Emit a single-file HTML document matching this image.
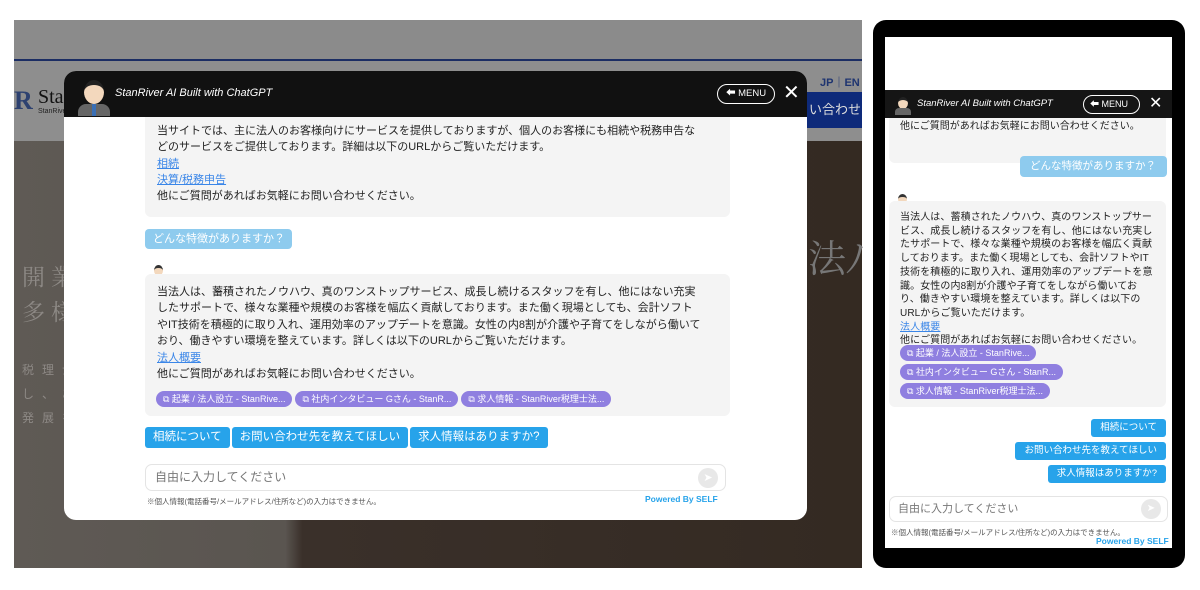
<!DOCTYPE html>
<html><head><meta charset="utf-8"><style>
*{margin:0;padding:0;box-sizing:border-box}
body{width:1200px;height:590px;background:#fff;position:relative;overflow:hidden;font-family:"Liberation Sans","Noto Sans CJK JP",sans-serif;color:#222}
.a{position:absolute}
.bub{background:#f4f4f4;border-radius:6px}
a{color:#3a86e8;text-decoration:underline}
.chip{display:inline-block;background:#8f7fe0;color:#fff;border-radius:9px;font-size:9px;height:16px;line-height:16px;padding:0 7px 0 7px;margin-right:3px}
.btn{display:inline-block;background:#27a3ea;color:#fff;border-radius:3px;font-size:11.5px;height:21px;line-height:21px;padding:0 8px;margin-right:2px}
.pbtn{background:#27a3ea;color:#fff;border-radius:3px;font-size:9.5px;height:18px;line-height:18px;padding:0 9px;position:absolute;right:6px}
.av{position:absolute;border-radius:50%}
</style></head><body>
<div class="a" style="left:14px;top:20px;width:848px;height:548px;background:#8b8b8b"></div>
<div class="a" style="left:14px;top:59px;width:848px;height:2px;background:#1b2d63"></div>
<div class="a" style="left:14px;top:61px;width:848px;height:80px;background:#8e8e8e"></div>
<div class="a" style="left:14px;top:86px;font-size:26px;color:#2d4170;font-weight:bold;font-family:'Liberation Serif',serif">R</div>
<div class="a" style="left:38px;top:86px;font-size:20px;color:#111;font-family:'Liberation Serif',serif">Sta</div>
<div class="a" style="left:38px;top:108px;font-size:7px;color:#222">StanRive</div>
<div class="a" style="left:820px;top:74px;font-size:11px;color:#1e3470;font-weight:bold">JP｜EN</div>
<div class="a" style="left:807px;top:92px;width:55px;height:36px;background:#0e2a7a;color:#ddd;font-size:13px;line-height:36px;padding-left:2px">い合わせ</div>
<div class="a" style="left:14px;top:141px;width:848px;height:427px;background:linear-gradient(90deg,#5f5a55 0%,#5a5550 32%,#3a302a 34%,#342a22 100%)"></div>
<div class="a" style="left:22px;top:258px;font-size:23px;color:#8d8985;letter-spacing:6px;line-height:35px;font-family:'Noto Serif CJK SC',serif">開業<br>多様</div>
<div class="a" style="left:22px;top:358px;font-size:12px;color:#8d8985;letter-spacing:8px;line-height:24px">税理士<br>し、あ<br>発展を</div>
<div class="a" style="left:808px;top:228px;font-size:38px;color:#777;font-family:'Noto Serif CJK SC',serif">法ﾉ</div>

<div class="a" style="left:64px;top:71px;width:743px;height:449px;background:#fff;border-radius:12px;overflow:hidden">
 <div class="a bub" style="left:81px;top:40px;width:585px;height:106px"></div>
 <div class="a" style="left:93px;top:52px;font-size:11px;line-height:16.3px;width:548px">当サイトでは、主に法人のお客様向けにサービスを提供しておりますが、個人のお客様にも相続や税務申告などのサービスをご提供しております。詳細は以下のURLからご覧いただけます。<br><a>相続</a><br><a>決算/税務申告</a><br>他にご質問があればお気軽にお問い合わせください。</div>
 <div class="a" style="left:0;top:0;width:743px;height:46px;background:#111"></div>
 <div class="a" style="left:14px;top:7px;width:32px;height:38px;overflow:hidden">
  <div class="av" style="left:6px;top:2px;width:20px;height:24px;background:#f3d8bd;border-top:5px solid #222"></div>
  <div class="a" style="left:0;top:26px;width:32px;height:14px;background:#666;border-radius:8px 8px 0 0"></div>
  <div class="a" style="left:14px;top:26px;width:4px;height:12px;background:#3a6fb5"></div>
 </div>
 <div class="a" style="left:51px;top:16px;font-size:11px;color:#fff;font-style:italic">StanRiver AI Built with ChatGPT</div>
 <div class="a" style="left:653px;top:13px;width:58px;height:20px;border:1px solid #fff;border-radius:10px;color:#fff;font-size:9.5px;line-height:18px;padding-left:8px">⬅︎ MENU</div>
 <div class="a" style="left:719px;top:11px;font-size:20px;color:#fff;line-height:22px">✕</div>

 <div class="a" style="left:81px;top:158px;width:147px;height:20px;background:#8ecbee;border-radius:4px;color:#fff;font-size:11px;line-height:20px;padding-left:8px">どんな特徴がありますか？</div>
 <div class="a" style="left:87px;top:194px;width:14px;height:18px;overflow:hidden">
  <div class="av" style="left:3px;top:0;width:9px;height:11px;background:#f3d8bd;border-top:3px solid #333"></div>
  <div class="a" style="left:0;top:11px;width:14px;height:7px;background:#777;border-radius:4px 4px 0 0"></div>
 </div>
 <div class="a bub" style="left:81px;top:203px;width:585px;height:142px"></div>
 <div class="a" style="left:93px;top:213px;font-size:11px;line-height:16.4px;width:545px">当法人は、蓄積されたノウハウ、真のワンストップサービス、成長し続けるスタッフを有し、他にはない充実したサポートで、様々な業種や規模のお客様を幅広く貢献しております。また働く現場としても、会計ソフトやIT技術を積極的に取り入れ、運用効率のアップデートを意識。女性の内8割が介護や子育てをしながら働いており、働きやすい環境を整えています。詳しくは以下のURLからご覧いただけます。<br><a>法人概要</a><br>他にご質問があればお気軽にお問い合わせください。</div>
 <div class="a" style="left:92px;top:318px;white-space:nowrap"><span class="chip">⧉ 起業 / 法人設立 - StanRive...</span><span class="chip">⧉ 社内インタビュー Gさん - StanR...</span><span class="chip">⧉ 求人情報 - StanRiver税理士法...</span></div>
 <div class="a" style="left:81px;top:356px;white-space:nowrap"><span class="btn">相続について</span><span class="btn">お問い合わせ先を教えてほしい</span><span class="btn">求人情報はありますか?</span></div>
 <div class="a" style="left:81px;top:393px;width:581px;height:27px;border:1px solid #e4e4e4;border-radius:7px;font-size:12px;color:#777;line-height:25px;padding-left:9px">自由に入力してください</div>
 <div class="av" style="left:634px;top:397px;width:20px;height:20px;background:#e8e8e8;color:#fff;font-size:11px;text-align:center;line-height:20px">➤</div>
 <div class="a" style="left:83px;top:425px;font-size:7.5px;color:#555">※個人情報(電話番号/メールアドレス/住所など)の入力はできません。</div>
 <div class="a" style="left:581px;top:423px;font-size:8.5px;color:#27a3ea;font-weight:bold">Powered By SELF</div>
</div>

<div class="a" style="left:873px;top:20px;width:312px;height:548px;background:#000;border-radius:13px"></div>
<div class="a" style="left:885px;top:37px;width:287px;height:511px;background:#fff;overflow:hidden">
 <div class="a bub" style="left:4px;top:70px;width:277px;height:56px"></div>
 <div class="a" style="left:15px;top:80px;font-size:10px">他にご質問があればお気軽にお問い合わせください。</div>
 <div class="a" style="left:0;top:0;width:287px;height:53px;background:#fff"></div>
 <div class="a" style="left:0;top:53px;width:287px;height:28px;background:#151515"></div>
 <div class="a" style="left:10px;top:59px;width:16px;height:19px;overflow:hidden">
  <div class="av" style="left:3px;top:1px;width:10px;height:12px;background:#f3d8bd;border-top:3px solid #222"></div>
  <div class="a" style="left:0;top:12px;width:16px;height:7px;background:#666;border-radius:4px 4px 0 0"></div>
 </div>
 <div class="a" style="left:32px;top:61px;font-size:9.5px;color:#fff;font-style:italic">StanRiver AI Built with ChatGPT</div>
 <div class="a" style="left:198px;top:58px;width:57px;height:19px;border:1px solid #fff;border-radius:10px;color:#fff;font-size:9px;line-height:17px;padding-left:6px">⬅︎ MENU</div>
 <div class="a" style="left:264px;top:57px;font-size:16px;color:#fff;line-height:20px">✕</div>
 <div class="a" style="left:135px;top:119px;width:147px;height:21px;background:#8ecbee;border-radius:4px;color:#fff;font-size:10.5px;line-height:21px;padding-left:10px">どんな特徴がありますか？</div>
 <div class="a" style="left:10px;top:157px;width:14px;height:16px;overflow:hidden">
  <div class="av" style="left:3px;top:0;width:9px;height:10px;background:#f3d8bd;border-top:3px solid #333"></div>
  <div class="a" style="left:0;top:10px;width:14px;height:6px;background:#777;border-radius:4px 4px 0 0"></div>
 </div>
 <div class="a bub" style="left:4px;top:164px;width:277px;height:206px"></div>
 <div class="a" style="left:15px;top:174px;font-size:10px;line-height:13.7px;width:254px;letter-spacing:0.1px">当法人は、蓄積されたノウハウ、真のワンストップサービス、成長し続けるスタッフを有し、他にはない充実したサポートで、様々な業種や規模のお客様を幅広く貢献しております。また働く現場としても、会計ソフトやIT技術を積極的に取り入れ、運用効率のアップデートを意識。女性の内8割が介護や子育てをしながら働いており、働きやすい環境を整えています。詳しくは以下のURLからご覧いただけます。<br><a>法人概要</a><br>他にご質問があればお気軽にお問い合わせください。</div>
 <div class="a" style="left:15px;top:306px"><span class="chip" style="font-size:9px">⧉ 起業 / 法人設立 - StanRive...</span></div>
 <div class="a" style="left:15px;top:325px"><span class="chip" style="font-size:9px">⧉ 社内インタビュー Gさん - StanR...</span></div>
 <div class="a" style="left:15px;top:344px"><span class="chip" style="font-size:9px">⧉ 求人情報 - StanRiver税理士法...</span></div>
 <div class="pbtn" style="top:382px">相続について</div>
 <div class="pbtn" style="top:405px">お問い合わせ先を教えてほしい</div>
 <div class="pbtn" style="top:428px">求人情報はありますか?</div>
 <div class="a" style="left:4px;top:459px;width:279px;height:26px;border:1px solid #e4e4e4;border-radius:7px;font-size:11px;color:#777;line-height:24px;padding-left:8px">自由に入力してください</div>
 <div class="av" style="left:256px;top:462px;width:20px;height:20px;background:#e8e8e8;color:#fff;font-size:10px;text-align:center;line-height:20px">➤</div>
 <div class="a" style="left:6px;top:490px;font-size:7.5px;color:#555">※個人情報(電話番号/メールアドレス/住所など)の入力はできません。</div>
 <div class="a" style="left:211px;top:499px;font-size:8.5px;color:#27a3ea;font-weight:bold">Powered By SELF</div>
</div>
</body></html>
